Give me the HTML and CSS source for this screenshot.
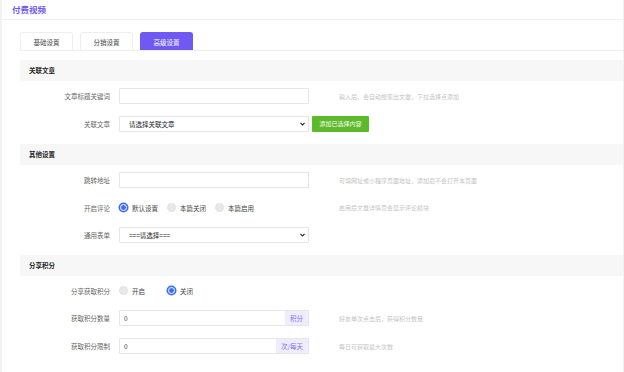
FILE: index.html
```html
<!doctype html>
<html>
<head>
    <meta charset="utf-8">
    <link rel="stylesheet" href="styles.css">
</head>
<body>
    <div class="card">
        <div class="head">付费视频</div>

        <div class="main">
            <div class="tabs">
                <div class="tab">基础设置</div>
                <div class="tab">分销设置</div>
                <div class="tab on">高级设置</div>
            </div>

            <div class="band">关联文章</div>
            <div class="row">
                <div class="lbl">文章标题关键词</div>
                <div class="inp"></div>
                <div class="tip">输入后，会自动搜索出文章，下拉选择点添加</div>
            </div>
            <div class="row">
                <div class="lbl">关联文章</div>
                <div class="inp sel">
                    <span class="val">请选择关联文章</span>
                    <svg width="5" height="4" viewBox="0 0 5 4"><path d="M0.5 0.8 L2.5 3 L4.5 0.8" fill="none" stroke="#222" stroke-width="1.1"/></svg>
                </div>
                <div class="btn">添加已选择内容</div>
            </div>

            <div class="band">其他设置</div>
            <div class="row">
                <div class="lbl">跳转地址</div>
                <div class="inp"></div>
                <div class="tip">可填网址或小程序页面地址，添加后不会打开本页面</div>
            </div>
            <div class="row short">
                <div class="lbl">开启评论</div>
                <div class="radios">
                    <label class="radio"><i class="dot on"></i>默认设置</label>
                    <label class="radio"><i class="dot"></i>本篇关闭</label>
                    <label class="radio"><i class="dot"></i>本篇启用</label>
                </div>
                <div class="tip">启用后文章详情页会显示评论模块</div>
            </div>
            <div class="row">
                <div class="lbl">通用表单</div>
                <div class="inp sel">
                    <span class="val">===请选择===</span>
                    <svg width="5" height="4" viewBox="0 0 5 4"><path d="M0.5 0.8 L2.5 3 L4.5 0.8" fill="none" stroke="#222" stroke-width="1.1"/></svg>
                </div>
            </div>

            <div class="band">分享积分</div>
            <div class="row short">
                <div class="lbl">分享获取积分</div>
                <div class="radios">
                    <label class="radio"><i class="dot"></i>开启</label>
                    <label class="radio"><i class="dot on"></i>关闭</label>
                </div>
            </div>
            <div class="row">
                <div class="lbl">获取积分数量</div>
                <div class="inp group">
                    <span class="val">0</span>
                    <span class="addon">积分</span>
                </div>
                <div class="tip">好友单次点击后，获得积分数量</div>
            </div>
            <div class="row">
                <div class="lbl">获取积分限制</div>
                <div class="inp group">
                    <span class="val">0</span>
                    <span class="addon">次/每天</span>
                </div>
                <div class="tip">每日可获取最大次数</div>
            </div>
        </div>
    </div>
</body>
</html>
```

FILE: styles.css
```css
html, body {
    margin:0;
    padding:0;
    background:#f2f2f2;
    font-family:"Noto Sans CJK SC", "Noto Sans", sans-serif;
    color:#333;
}

.card {
    margin:0 1px 0 2px;
    height:372px;
    background:#fff;
}

.head {
    height:20px;
    line-height:19px;
    padding-left:10px;
    font-size:8.5px;
    font-weight:bold;
    color:#6d58ee;
    border-bottom:1px solid #f0f0f0;
    box-sizing:border-box;
}

.main {
    padding:12px 0 0 18px;
}

.tabs {
    display:flex;
    gap:7px;
    height:18px;
    border-bottom:1px solid #eeeeee;
    margin-bottom:9px;
}

.tab {
    width:53px;
    height:18px;
    line-height:18px;
    box-sizing:border-box;
    border:1px solid #eeeeee;
    border-bottom:none;
    border-radius:3px 3px 0 0;
    text-align:center;
    font-size:6.5px;
    color:#444;
}

.tab.on {
    background:#7059f3;
    border-color:#7059f3;
    color:#fff;
}

.band {
    height:21px;
    line-height:21px;
    padding-left:9px;
    background:#f7f7f7;
    font-size:6.5px;
    font-weight:bold;
    color:#222;
    margin-bottom:7px;
}

.row {
    display:flex;
    align-items:center;
    height:16px;
    margin-bottom:12px;
}

.row.short {
    height:15px;
}

.lbl {
    width:90px;
    padding-right:9px;
    text-align:right;
    font-size:6.5px;
    color:#666;
    flex:none;
}

.inp {
    width:190px;
    height:16px;
    box-sizing:border-box;
    border:1px solid #e6e6e6;
    border-radius:1px;
    flex:none;
    display:flex;
    align-items:center;
    font-size:6.5px;
    color:#333;
}

.sel {
    justify-content:space-between;
    padding:0 3px 0 9px;
}

.sel .val {
    color:#222;
}

.group {
    padding-left:4px;
    justify-content:space-between;
}

.group .val {
    color:#444;
}

.addon {
    height:100%;
    display:flex;
    align-items:center;
    padding:0 5px;
    background:#efecfd;
    color:#8470f0;
}

.tip {
    margin-left:30px;
    font-size:6px;
    color:#c4c4c4;
}

.btn {
    margin-left:3px;
    width:57px;
    height:16px;
    line-height:16px;
    text-align:center;
    background:#5dba2a;
    color:#f4fbef;
    font-size:6px;
    border-radius:1px;
}

.radios {
    display:flex;
    width:190px;
    flex:none;
}

.radio {
    width:48px;
    display:flex;
    align-items:center;
    gap:4px;
    font-size:6.5px;
    color:#444;
}

.dot {
    width:9px;
    height:9px;
    box-sizing:border-box;
    border-radius:50%;
    background:#e9e9e9;
    border:1px solid #e0e0e0;
}

.dot.on {
    background:#3b6ef6;
    border:1.5px solid #fff;
    box-shadow:0 0 0 1.5px #3b6ef6;
    width:7px;
    height:7px;
    margin:0 1px;
}
```
